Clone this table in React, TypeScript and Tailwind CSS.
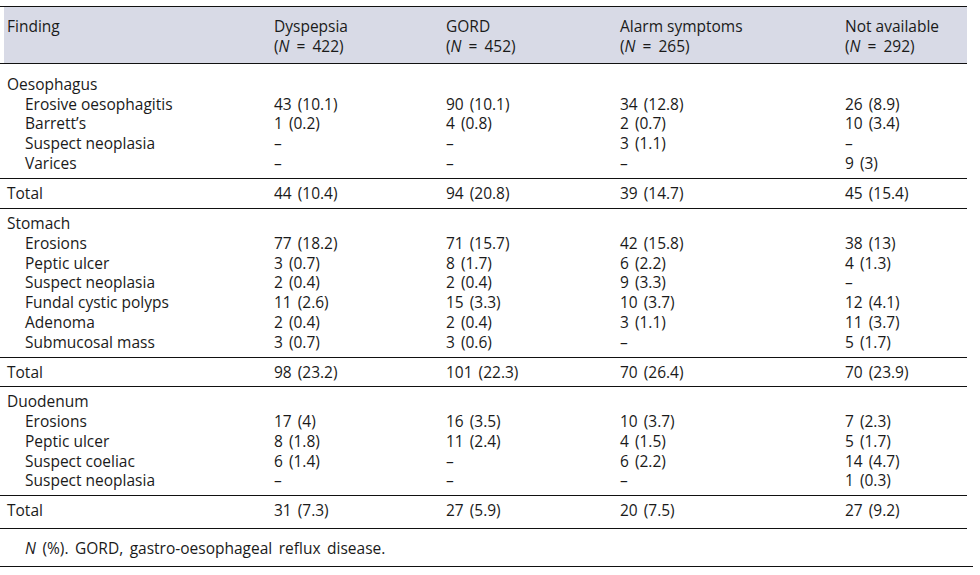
import React from "react";

type Row = [string, string, string, string, string];

const sections: { title: string; rows: Row[]; total: Row; body: string; pitch: string; tot: string }[] = [
  {
    title: "Oesophagus",
    rows: [
      ["Erosive oesophagitis", "43 (10.1)", "90 (10.1)", "34 (12.8)", "26 (8.9)"],
      ["Barrett’s", "1 (0.2)", "4 (0.8)", "2 (0.7)", "10 (3.4)"],
      ["Suspect neoplasia", "–", "–", "3 (1.1)", "–"],
      ["Varices", "–", "–", "–", "9 (3)"],
    ],
    total: ["Total", "44 (10.4)", "94 (20.8)", "39 (14.7)", "45 (15.4)"],
    body: "h-[114px] pt-[10px]",
    pitch: "h-[19.75px]",
    tot: "h-[29px] pt-[4px]",
  },
  {
    title: "Stomach",
    rows: [
      ["Erosions", "77 (18.2)", "71 (15.7)", "42 (15.8)", "38 (13)"],
      ["Peptic ulcer", "3 (0.7)", "8 (1.7)", "6 (2.2)", "4 (1.3)"],
      ["Suspect neoplasia", "2 (0.4)", "2 (0.4)", "9 (3.3)", "–"],
      ["Fundal cystic polyps", "11 (2.6)", "15 (3.3)", "10 (3.7)", "12 (4.1)"],
      ["Adenoma", "2 (0.4)", "2 (0.4)", "3 (1.1)", "11 (3.7)"],
      ["Submucosal mass", "3 (0.7)", "3 (0.6)", "–", "5 (1.7)"],
    ],
    total: ["Total", "98 (23.2)", "101 (22.3)", "70 (26.4)", "70 (23.9)"],
    body: "h-[148px] pt-[4px]",
    pitch: "h-[19.83px]",
    tot: "h-[28px] pt-[3.5px]",
  },
  {
    title: "Duodenum",
    rows: [
      ["Erosions", "17 (4)", "16 (3.5)", "10 (3.7)", "7 (2.3)"],
      ["Peptic ulcer", "8 (1.8)", "11 (2.4)", "4 (1.5)", "5 (1.7)"],
      ["Suspect coeliac", "6 (1.4)", "–", "6 (2.2)", "14 (4.7)"],
      ["Suspect neoplasia", "–", "–", "–", "1 (0.3)"],
    ],
    total: ["Total", "31 (7.3)", "27 (5.9)", "20 (7.5)", "27 (9.2)"],
    body: "h-[108px] pt-[4.4px]",
    pitch: "h-[19.75px]",
    tot: "h-[32px] pt-[4px]",
  },
];

const cols = "grid grid-cols-[267px_172px_174px_225px_125px]";
const num = "whitespace-pre [word-spacing:2px]";

function DataRow({ row, indent, h }: { row: Row; indent?: boolean; h: string }) {
  return (
    <div className={`${cols} pl-[7px] ${h} items-center`}>
      <div className={indent ? "pl-[18px] whitespace-pre" : "whitespace-pre"}>{row[0]}</div>
      <div className={num}>{row[1]}</div>
      <div className={num}>{row[2]}</div>
      <div className={num}>{row[3]}</div>
      <div className={num}>{row[4]}</div>
    </div>
  );
}

function Head({ a, b }: { a: string; b: string }) {
  return (
    <div>
      <div className="h-[20px] flex items-center">{a}</div>
      <div className="h-[20px] flex items-center whitespace-pre [word-spacing:3px]">
        (<span className="italic">N</span> = {b})
      </div>
    </div>
  );
}

function Rule() {
  return <div className="h-[1px] bg-[#111]" />;
}

export default function App() {
  return (
    <div
      className="w-[980px] h-[575px] bg-white text-[#1a1a1a] text-[15.5px] leading-[18px]"
      style={{ fontFamily: '"Open Sans", "Noto Sans", sans-serif' }}
    >
      <div className="h-[6px]" />
      <div className="w-[967px]">
        <Rule />
        <div className="ml-[4px] bg-[#d8dae6] h-[56px] pt-[9px]">
          <div className={`${cols} pl-[3px]`}>
            <div className="h-[20px] flex items-center">Finding</div>
            <Head a="Dyspepsia" b="422" />
            <Head a="GORD" b="452" />
            <Head a="Alarm symptoms" b="265" />
            <Head a="Not available" b="292" />
          </div>
        </div>
        <Rule />
        {sections.map((s) => (
          <div key={s.title}>
            <div className={s.body}>
              <div className={`pl-[7px] ${s.pitch} flex items-center`}>{s.title}</div>
              {s.rows.map((r) => (
                <DataRow key={r[0]} row={r} indent h={s.pitch} />
              ))}
            </div>
            <Rule />
            <div className={s.tot}>
              <DataRow row={s.total} h="h-[20px]" />
            </div>
            <Rule />
          </div>
        ))}
      </div>
      <div className="w-[973px]">
        <div className="h-[37px] pt-[10px] pl-[25px] whitespace-pre [word-spacing:2.5px]">
          <span className="italic">N</span> (%). GORD, gastro-oesophageal reflux disease.
        </div>
        <Rule />
      </div>
    </div>
  );
}
